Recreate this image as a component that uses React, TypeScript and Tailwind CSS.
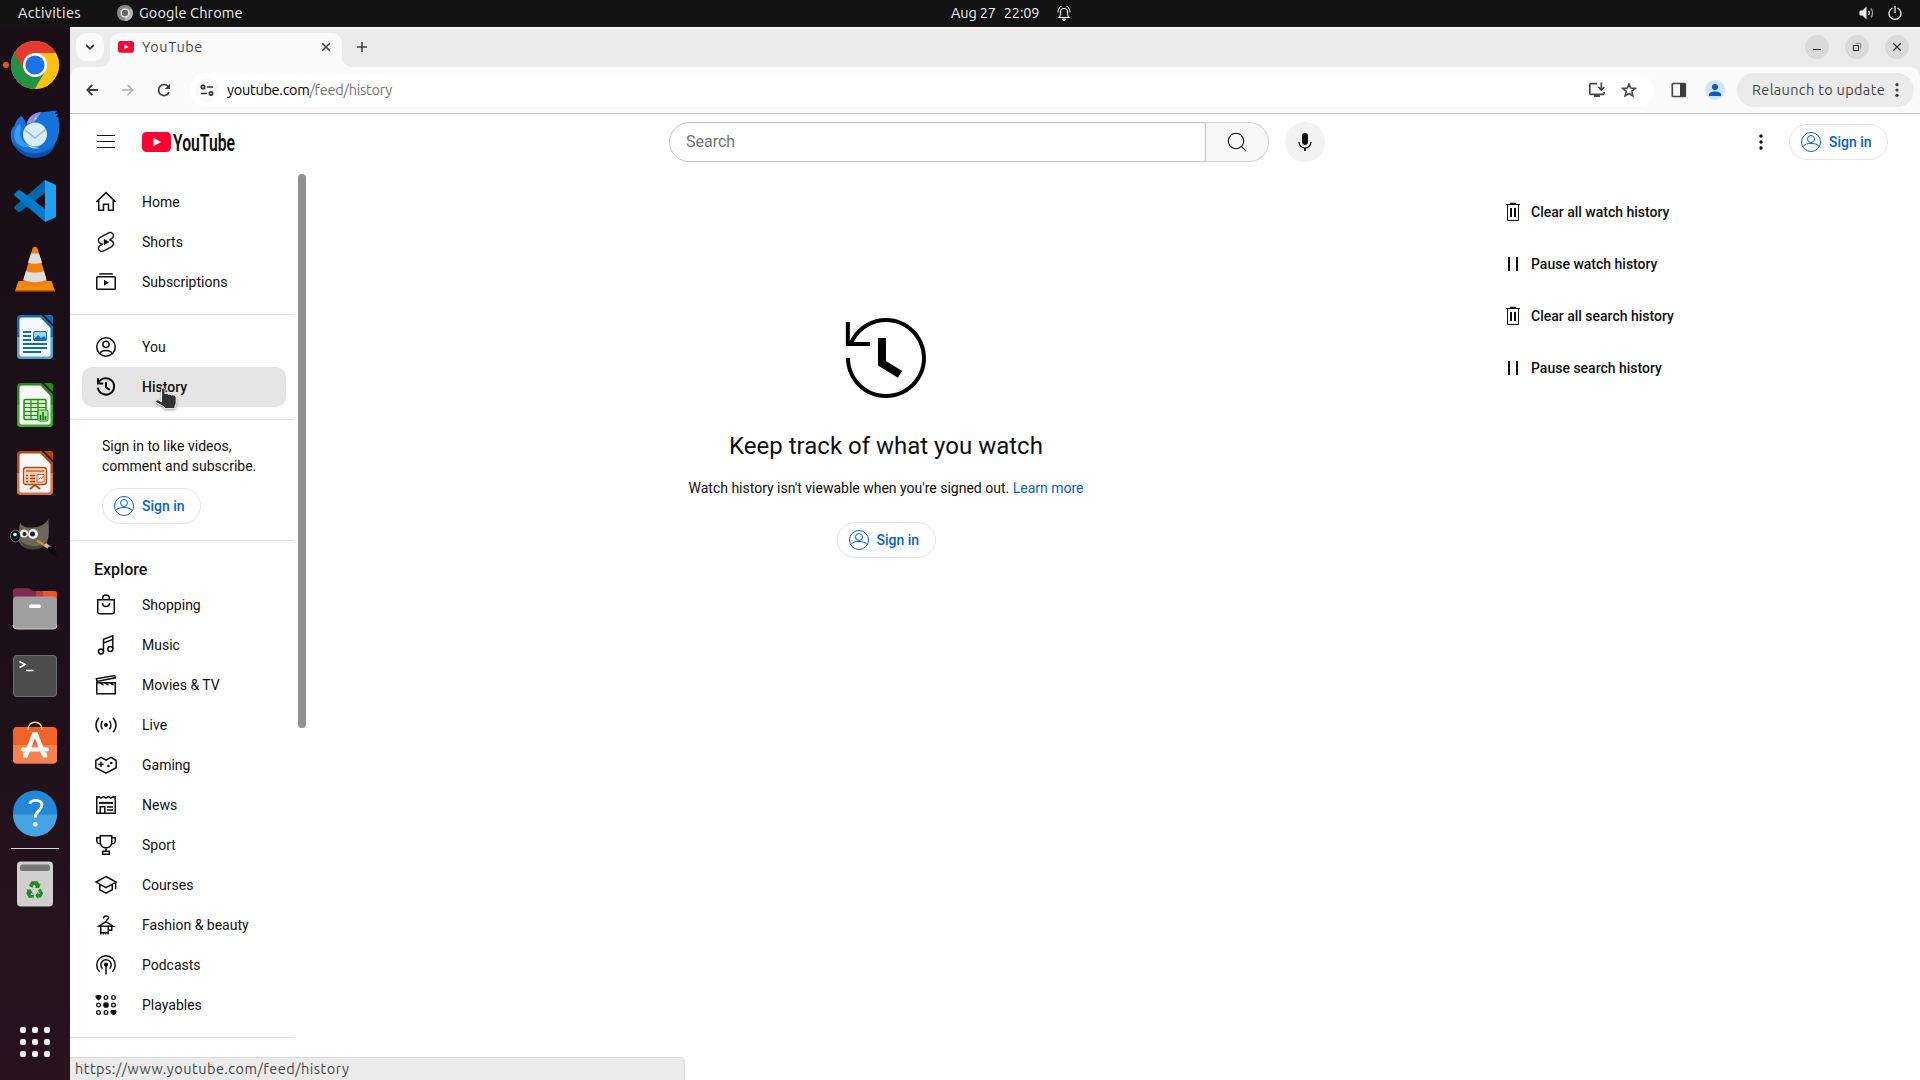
import React from "react";

const UBUNTU = "font-['Ubuntu','Noto_Sans',sans-serif]";

/* ---------- sidebar icons (24 × 24 grid) ---------- */

function Icon({ children, w = 1.5, className = "text-[#0f0f0f]" }: { children: React.ReactNode; w?: number; className?: string }) {
  return (
    <svg viewBox="0 0 24 24" width="24" height="24" fill="none" stroke="currentColor" strokeWidth={w} className={"shrink-0 " + className}>
      {children}
    </svg>
  );
}

const icons: Record<string, React.ReactNode> = {
  Home: (
    <Icon>
      <path d="M2.4 11.9 12 2.6l9.6 9.3M4.75 10v10.25H9.5v-6h5v6h4.75V10" />
    </Icon>
  ),
  Shorts: (
    <Icon w={0.5}>
      <path
        fill="currentColor"
        d="M10 14.65v-5.3L15 12l-5 2.65zm7.77-4.33-1.2-.5L18 9.06c1.84-.96 2.53-3.23 1.56-5.06s-3.24-2.53-5.07-1.56L6 6.94c-1.29.68-2.07 2.04-2 3.49.07 1.42.93 2.67 2.22 3.25.03.01 1.2.5 1.2.5L6 14.93c-1.83.97-2.53 3.24-1.56 5.07.97 1.83 3.24 2.53 5.07 1.56l8.5-4.5c1.29-.68 2.06-2.04 1.99-3.49-.07-1.42-.94-2.68-2.23-3.25zm-.23 5.86-8.5 4.5c-1.34.71-3.01.2-3.72-1.14-.71-1.34-.2-3.01 1.14-3.72l2.04-1.08v-1.21l-.69-.28-1.11-.46c-.99-.41-1.65-1.35-1.7-2.41-.05-1.06.52-2.06 1.46-2.56l8.5-4.5c1.34-.71 3.01-.2 3.72 1.14.71 1.34.2 3.01-1.14 3.72L15.5 9.26v1.21l1.8.74c.99.41 1.65 1.35 1.7 2.41.05 1.06-.52 2.06-1.46 2.56z"
      />
    </Icon>
  ),
  Subscriptions: (
    <Icon>
      <path d="M5.2 3.9h13.6" />
      <rect x="2.75" y="6.75" width="18.5" height="12.5" rx="0.8" />
      <path d="m10 9.8 5 3-5 3z" fill="currentColor" stroke="none" />
    </Icon>
  ),
  You: (
    <Icon>
      <circle cx="12" cy="12" r="9.25" />
      <circle cx="12" cy="9.3" r="3.1" />
      <path d="M5.8 18.6c1.6-4.2 10.8-4.2 12.4 0" />
    </Icon>
  ),
  History: (
    <Icon w={2}>
      <path d="M4 3.2V8.4h5.2M4.3 8.3A8.2 8.2 0 1 1 3.8 12.6" />
      <path d="M12 7.3v5l3.8 2.6" />
    </Icon>
  ),
  Shopping: (
    <Icon>
      <path d="M3.75 6.75h16.5v11.9a2 2 0 0 1-2 2H5.75a2 2 0 0 1-2-2zM8.75 6.500V4.600C8.750 1 15.250 1 15.250 4.600v1.900M8.500 10c0 4.600 7 4.600 7 0" />
    </Icon>
  ),
  Music: (
    <Icon>
      <circle cx="7" cy="18.4" r="2.5" />
      <circle cx="16.300" cy="16" r="2.500" />
      <path d="M9.500 18.400V6.200l9.300-3.400V16M9.500 10l9.300-3.600" />
    </Icon>
  ),
  "Movies & TV": (
    <Icon>
      <path d="M2.75 9.75h18.5v11H2.75zM2.4 5.7l18.4-3.2.4 2.3-18.3 3.6z" />
      <path d="m5 9.7 3 2.6h2.4L8 9.7zm5 0 3 2.6h2.4L13 9.7zm5 0 3 2.6h2.4L18 9.7z" fill="currentColor" stroke="none" />
    </Icon>
  ),
  Live: (
    <Icon>
      <circle cx="12" cy="12" r="2" fill="currentColor" stroke="none" />
      <path d="M8.6 7.8c-2 2.2-2 6.2 0 8.4M15.4 7.8c2 2.2 2 6.2 0 8.4M5 4.9c-4 3.8-4 10.4 0 14.2M19 4.9c4 3.8 4 10.4 0 14.2" />
    </Icon>
  ),
  Gaming: (
    <Icon>
      <path d="m7 4.400 5 2.800 5-2.800 5.200 3.100v7.200L12 20.100 1.800 14.700V7.500z" />
      <path d="M7 8.500v5.400M4.300 11.200h5.400" />
      <circle cx="17.300" cy="10" r="1.300" fill="currentColor" stroke="none" />
      <circle cx="14.400" cy="13" r="1.300" fill="currentColor" stroke="none" />
    </Icon>
  ),
  News: (
    <Icon>
      <path d="M2.75 3v17.25h18.5V3M2.75 5.1l2.1-1.4 2.2 1.4 2.4-1.4L12 5.1l2.4-1.4 2.4 1.4L19 3.7l2.2 1.4" />
      <path d="M5 9.9h14" strokeWidth="2" />
      <path d="M6.2 20v-6.2h4.6V20M13 13.9h6M13 17h6" />
    </Icon>
  ),
  Sport: (
    <Icon>
      <path d="M6.25 2.75h11.5v6.5c0 7.3-11.5 7.3-11.5 0zM6 4.8H2.75v2.6c0 2 1.6 3.4 3.6 3.4M18 4.8h3.25v2.6c0 2-1.6 3.4-3.6 3.4M12 14.8v3.4M8.75 18.25h6.5v3h-6.5z" />
    </Icon>
  ),
  Courses: (
    <Icon>
      <path d="m12 3.5 10 5.6-10 5.6L2 9.1zM5.75 11.5v5.2L12 20.2l6.25-3.5v-5.2M21.6 9.3v7" />
    </Icon>
  ),
  "Fashion & beauty": (
    <Icon>
      <path d="M9.7 5.4c-.4-3 4.7-3.4 4.8-.6.1 1.8-2.5 1.8-2.5 3.9L5 13.2h14l-7-4.5M6.75 13.4v6.4h7.5v-6.4M14.5 17.2h3.2v-3.8" />
      <path d="M6.75 19.5v2M9.25 19.5v2M11.75 19.5v2M14.25 19.5v2" strokeWidth="1.2" />
    </Icon>
  ),
  Podcasts: (
    <Icon>
      <circle cx="12" cy="11.6" r="2.1" fill="currentColor" stroke="none" />
      <path d="M12 11.6v9.8M5.6 18.700a9.250 9.250 0 1 1 12.800 0M8.400 15.700a5.200 5.200 0 1 1 7.200 0" />
    </Icon>
  ),
  Playables: (
    <Icon w={1.3}>
      {[4.5, 12, 19.5].map((y, r) =>
        [4.5, 12, 19.5].map((x, c) => (
          <circle key={x + "-" + y} cx={x} cy={y} r={r === c ? (r === 1 ? 2.2 : 1.6) : 1.85} fill={r === c ? "currentColor" : "none"} />
        ))
      )}
      <path d="M4.500 7.400 1.600 4.500c-1-1.800 1.700-3.600 2.900-1.800 1.200-1.800 3.900 0 2.900 1.800zM19.500 22.400l-2.900-2.900c-1-1.800 1.700-3.600 2.900-1.800 1.200-1.800 3.900 0 2.900 1.800z" fill="currentColor" stroke="none" />
    </Icon>
  ),
};

function UserGlyph() {
  return (
    <Icon w={1} className="text-[#065fd4]">
      <circle cx="12" cy="12" r="9.5" />
      <circle cx="12" cy="9" r="3.5" />
      <path d="M3.9 16.700C5 14 9 13.500 12 13.500s7 .5 8.100 3.200" />
    </Icon>
  );
}

function SignIn({ className = "" }: { className?: string }) {
  return (
    <button className={"flex h-9 w-[99px] items-center rounded-full border border-[#e5e5e5] pl-[9px] text-sm font-medium text-[#065fd4] " + className}>
      <UserGlyph />
      <span className="ml-1.5">Sign in</span>
    </button>
  );
}

function NavItem({ label, active = false }: { label: string; active?: boolean }) {
  return (
    <div className={"ml-3 flex h-10 w-[204px] shrink-0 items-center rounded-[10px] pl-3 text-sm " + (active ? "bg-[#e5e5e5] font-medium" : "")}>
      {icons[label]}
      <span className="ml-6">{label}</span>
    </div>
  );
}

const explore = ["Shopping", "Music", "Movies & TV", "Live", "Gaming", "News", "Sport", "Courses", "Fashion & beauty", "Podcasts", "Playables"];

function Sidebar() {
  return (
    <aside className="flex w-60 shrink-0">
      <div className="flex w-56 shrink-0 flex-col overflow-hidden">
        <div className="flex flex-col border-b border-[#e5e5e5] pt-3 pb-3">
          <NavItem label="Home" />
          <NavItem label="Shorts" />
          <NavItem label="Subscriptions" />
        </div>
        <div className="flex flex-col border-b border-[#e5e5e5] pt-3 pb-3">
          <NavItem label="You" />
          <NavItem label="History" active />
        </div>
        <div className="flex flex-col border-b border-[#e5e5e5] pt-4 pb-4 pl-8 text-sm leading-5">
          <p>
            Sign in to like videos,
            <br />
            comment and subscribe.
          </p>
          <SignIn className="mt-3" />
        </div>
        <div className="flex flex-col border-b border-[#e5e5e5] pt-3 pb-3">
          <h3 className="pt-[5px] pb-[3px] pl-6 text-base leading-6 font-medium">Explore</h3>
          {explore.map((l) => (
            <NavItem key={l} label={l} />
          ))}
        </div>
      </div>
      <div className="mt-1 ml-1 h-[554px] w-2 rounded-full bg-[#909090]" />
    </aside>
  );
}

/* ---------- dock icons (48 × 48 grid) ---------- */

function D({ children, dy = 0 }: { children: React.ReactNode; dy?: number }) {
  return (
    <div className="flex h-[68px] w-full shrink-0 items-center justify-center">
      <svg viewBox="0 0 48 48" width="48" height="48" className="overflow-visible">
        <g transform={`translate(0 ${dy})`}>{children}</g>
      </svg>
    </div>
  );
}

function OfficeDoc({ edge, dark, children }: { edge: string; dark: string; children: React.ReactNode }) {
  return (
    <D>
      <path d="M10 2h20.5L42 13.5V42a4 4 0 0 1-4 4H10a4 4 0 0 1-4-4V6a4 4 0 0 1 4-4z" fill={dark} />
      <path d="M6 24h36v18a4 4 0 0 1-4 4H10a4 4 0 0 1-4-4z" fill={edge} />
      <path d="M10.5 4.5h19L39.5 15v26.5a2 2 0 0 1-2 2h-27a2 2 0 0 1-2-2v-35a2 2 0 0 1 2-2z" fill="#f8f8f8" />
      <path d="M33 2h7a2 2 0 0 1 2 2v7z" fill={dark} />
      {children}
    </D>
  );
}

function Dock() {
  return (
    <nav className="relative flex w-[70px] shrink-0 flex-col items-center bg-linear-to-b from-[#190e15] via-[#1b1017] to-[#28131f] pt-1">
      <span className="absolute top-[35px] left-[3px] h-1.5 w-1.5 rounded-full bg-[#e95420]" />
      <D>
        <circle cx="24" cy="24" r="24" fill="#fbc116" />
        <path d="M3.200 12A24 24 0 0 0 24 48l10.400-18L24 24z" fill="#229342" />
        <path d="M3.200 12A24 24 0 0 1 44.800 12H24L13.600 30z" fill="#e33b2e" />
        <path d="M44.800 12A24 24 0 0 1 24 48l10.400-18V12z" fill="#fbc116" />
        <circle cx="24" cy="24" r="12" fill="#fff" />
        <circle cx="24" cy="24" r="9.600" fill="#1a73e8" />
      </D>
      <D dy={1}>
        <path d="M0 22c1-3 2-6 3-5 1-5 4-9 7-11 3 2 5 6 5 10 1-8 9-14 18-14 5 0 7-2 13-1-1 1-2 2-2 3h3c-1 2-2 2-2 3h2c3 10 1 23-6 31-9 11-27 11-35 1C1 35-1 28 0 22z" fill="#1671d8" />
        <path d="M2 30c6 16 30 18 43 4-4 9-12 14-21 14S4 42 2 30z" fill="#0d4fa6" />
        <path d="M4 30c-2-8 1-13 5-17 1 5 1 8 0 11 1 9 10 12 13 12-8 3-15 0-18-6z" fill="#3b9af0" />
        <path d="M16 14c1-7 6-11 14-12-2 3-4 8-7 10z" fill="#8f8df0" />
        <circle cx="24" cy="24.500" r="12" fill="#d9ecfc" />
        <path d="M13.500 19.500 24 28l10.500-8.500" fill="none" stroke="#8fb8e4" strokeWidth="1.600" />
        <path d="M17 35c5 2 8 2 12 3-6 1-11 0-12-3z" fill="#c9d5fb" />
        <circle cx="24.500" cy="8.500" r="1.100" fill="#fff" />
      </D>
      <D>
        <path d="m34 3-30 26c-1 1-1 2 0 3l3 2.600c.9.700 1.800.600 2.600 0L34 16z" fill="#0065a9" />
        <path d="M34 45 4 19c-1-1-1-2 0-3l3-2.600c.9-.7 1.800-.6 2.600 0L34 32z" fill="#007acc" />
        <path d="m34 3 10 4.400c.7.300 1 .9 1 1.600v30c0 .7-.3 1.300-1 1.600L34 45z" fill="#1fa2f2" />
      </D>
      <D>
        <path d="M7.500 36h33L44 46H4z" fill="#f58a0a" />
        <path d="M4 45h40v1.500H4z" fill="#c85f00" />
        <path d="M21.500 3.500c.5-2.500 4.500-2.500 5 0L36.500 38c-3 4.500-22 4.500-25 0z" fill="#f08010" />
        <path d="m20 8.500h8l3 9c-4 1.600-10 1.600-14 0z" fill="#dedede" />
        <path d="m15 26c5 2 13 2 18 0l2.400 8.500c-6 3.500-17 3.500-23 0z" fill="#dedede" />
      </D>
      <OfficeDoc edge="#4ba3d6" dark="#0f72b0">
        <path d="M12 19h8M12 23h8M12 27h8M12 31h24M12 35h24M12 39h18" stroke="#0f6fb0" strokeWidth="2" />
        <rect x="22.500" y="18.500" width="13" height="9" rx="1.500" fill="#9ed3f3" stroke="#0f6fb0" />
        <path d="m23 26 4-4 3 3 3-2 2.500 3v1.500H23z" fill="#0f6fb0" />
      </OfficeDoc>
      <OfficeDoc edge="#35ad22" dark="#258a16">
        <rect x="13" y="18.500" width="22" height="20" rx="1.500" fill="#d5f5cc" stroke="#258a16" strokeWidth="1.500" />
        <path d="M13 22.500h22M13 26.500h22M13 30.500h22M13 34.500h22M20 18.500v20M27 18.500v20" stroke="#258a16" strokeWidth="1.200" />
        <rect x="27" y="29" width="10" height="11" rx="1.500" fill="#a9e59a" stroke="#258a16" />
        <path d="M29.500 39v-5M32 39v-8M34.500 39v-4" stroke="#176e0b" strokeWidth="1.500" />
      </OfficeDoc>
      <OfficeDoc edge="#e0713a" dark="#b8480f">
        <rect x="12.500" y="18.500" width="23" height="17" rx="2.500" fill="#f3d2c2" stroke="#b8480f" strokeWidth="1.300" />
        <path d="M15 22h18" stroke="#d0622c" strokeWidth="1.500" />
        <path d="M15 26.500h2M15 29.500h2M15 32.500h2M19 26.500h5M19 29.500h5M19 32.500h5" stroke="#a0400c" strokeWidth="1.600" />
        <path d="M26 25.500h7v7.500h-7z" fill="#fff" stroke="#d0622c" />
        <path d="m27.500 31 2-2.500 1.500 1 1.500-2.500" fill="none" stroke="#d0622c" />
        <path d="m24 36-5 4M24 36l5 4" stroke="#b8480f" strokeWidth="2" />
      </OfficeDoc>
      <D dy={1.5}>
        <path d="M9 4c3 5 7 5 12 5 8 0 13-3 16.500-8.500 0 6 1 14-.5 20-2 7-8 10-15 10-9 0-14-4-15-11C8 15 8 10 9 4z" fill="#6b675c" />
        <path d="M9 21c4 7 20 10 28 1-2 6-8 9-15 9-8 0-12-4-13-10z" fill="#47443c" />
        <ellipse cx="4.500" cy="17.500" rx="5" ry="6" fill="#15181b" stroke="#6e7478" />
        <circle cx="4" cy="16" r="1.800" fill="#e8f2f8" />
        <circle cx="13" cy="15" r="4" fill="#e9e9e9" />
        <circle cx="13.500" cy="15.500" r="2" fill="#222" />
        <circle cx="22" cy="15.500" r="5" fill="#f1f1f1" />
        <circle cx="21.500" cy="15.500" r="2.500" fill="#222" />
        <path d="m26 22 11 7" stroke="#e48a22" strokeWidth="2.200" />
        <path d="m34 26 5 3.500" stroke="#b9bcbf" strokeWidth="3.500" />
        <path d="M38 28c4 0 7 4 8 10-4-2-8-3-10-7z" fill="#0c0c0c" />
      </D>
      <D>
        <path d="M2 14V6.500a3 3 0 0 1 3-3h12c2 0 3 2.500 5 2.500h21a3 3 0 0 1 3 3V16H2z" fill="#c23c3c" />
        <path d="M2 14V6.500a3 3 0 0 1 3-3h12c2 0 3 2.500 5 2.500h3v8z" fill="#84294f" />
        <path d="M32 6h11a3 3 0 0 1 3 3v7H32z" fill="#e4572a" />
        <rect x="2" y="11.500" width="44" height="32.500" rx="4" fill="#a09f9f" />
        <path d="M2 40a4 4 0 0 0 4 4h36a4 4 0 0 0 4-4" fill="none" stroke="#c9c9c9" strokeWidth="1" />
        <rect x="18" y="19.500" width="12" height="3.500" rx="1.500" fill="#fff" />
      </D>
      <D dy={1}>
        <rect x="2" y="1" width="44" height="42" rx="4" fill="#4c4c4c" />
        <rect x="2.500" y="1.500" width="43" height="41" rx="3.500" fill="none" stroke="#6b6b6b" />
        <path d="m8.500 7.500 5.500 3-5.500 3M15 16.500h7.500" fill="none" stroke="#fff" strokeWidth="1.600" />
      </D>
      <D>
        <rect x="2" y="6" width="44" height="36.500" rx="4" fill="#f0622c" />
        <path d="M2 24h44v14.500a4 4 0 0 1-4 4H6a4 4 0 0 1-4-4z" fill="#f4834f" />
        <path d="M17 9c0-10.500 14-10.500 14 0" fill="none" stroke="#f6d7ab" strokeWidth="1.500" />
        <path d="M15.500 33 23 13.500h2L32.500 33" fill="none" stroke="#fff" strokeWidth="4.500" />
        <path d="M12.500 31.500h5.500L16.500 36.500H12zM30 31.500h5.500l.8 5H32z" fill="#fff" />
        <rect x="10" y="26.500" width="28" height="4" rx="2" fill="#fff" />
      </D>
      <D dy={-0.5}>
        <circle cx="24" cy="24" r="22" fill="#2386d6" />
        <path d="M2 26a22 22 0 0 0 44 0z" fill="#44a3e3" />
        <path d="M18.800 15.500c1-5 12.200-5 12.200 1.200 0 5.500-6.800 5.500-6.800 12.300" fill="none" stroke="#fff" strokeWidth="2.800" />
        <circle cx="24.200" cy="35.800" r="2.400" fill="#fff" />
      </D>
      <div className="mt-px h-px w-12 shrink-0 bg-[#d8d5d7]" />
      <div className="h-px shrink-0" />
      <D dy={-0.5}>
        <rect x="6" y="2" width="36" height="45" rx="4" fill="#cfcfcf" />
        <rect x="9" y="5" width="30" height="6.500" rx="2.500" fill="#777" />
        <g transform="translate(14.500 21) scale(0.750)" fill="#1f8a24">
          <path d="M8 1h8l2.500 4 2-1-2.500 6h-6l2-1.300L11.500 5 9 9.500 4.500 7z" />
          <path d="M20 11l3.500 6-3 5.500H17V25l-4-5 4-5v2.500h2.500L16.500 13z" />
          <path d="M1 12H7l3 5.500-2-1L6.500 19H11v4H4.500L1 17l1.500-3z" />
        </g>
      </D>
      <div className="mt-auto mb-[23px] grid grid-cols-3 gap-1.5">
        {Array.from({ length: 9 }, (_, i) => (
          <span key={i} className="h-1.5 w-1.5 rounded-[2px] bg-[#f2f2f2]" />
        ))}
      </div>
    </nav>
  );
}

/* ---------- desktop bar ---------- */

function TopBar() {
  return (
    <div className={"flex h-[27px] shrink-0 items-center bg-[#131313] text-[#f0f0f0] " + UBUNTU}>
      <span className="mb-px ml-[18px] w-[63px] text-[14.5px] tracking-[0.35px] whitespace-nowrap">Activities</span>
      <svg viewBox="0 0 16 16" width="16" height="16" className="mb-px ml-9">
        <circle cx="8" cy="8" r="8" fill="#8b8b8b" />
        <path d="M8 16A8 8 0 0 0 15 4.500H8z" fill="#b5b5b5" />
        <circle cx="8" cy="8" r="3.800" fill="#666" stroke="#eee" strokeWidth="1.300" />
      </svg>
      <span className="mb-px ml-[6px] w-[106px] text-[14.5px] tracking-[0.15px] whitespace-nowrap">Google Chrome</span>
      <div className="mb-px ml-[706px] flex w-[88px] gap-2 text-[14.5px] tracking-[-0.15px] whitespace-nowrap">
        <span>Aug 27</span>
        <span>22:09</span>
      </div>
      <svg viewBox="0 0 14 16" width="14" height="16" fill="none" stroke="#f0f0f0" className="mb-0.5 ml-[18px]">
        <path d="M2 12.500c1.500-1 1.500-3 1.500-5.500a3.500 3.500 0 0 1 7 0c0 2.500 0 4.500 1.500 5.500zM1 7.500C1 4 2.500 2 4.500 1.200M13 7.500c0-3.500-1.500-5.500-3.500-6.300" strokeWidth="1.100" />
        <path d="M5.500 14a1.500 1.500 0 0 0 3 0z" fill="#f0f0f0" />
      </svg>
      <div className="mr-[18px] mb-px ml-auto flex items-center gap-[13px]">
        <svg viewBox="0 0 16 16" width="16" height="16" fill="none" stroke="#f0f0f0">
          <path d="M1.500 5.500h2L7.500 1.500v13l-4-4h-2a1 1 0 0 1-1-1v-3a1 1 0 0 1 1-1z" fill="#f0f0f0" stroke="none" />
          <path d="M9.500 6c1 1 1 3 0 4" strokeWidth="1.300" />
          <path d="M12 3.500c2 2.500 2 6.500 0 9" stroke="#aaa" strokeWidth="1.300" />
        </svg>
        <svg viewBox="0 0 14 16" width="14" height="16" fill="none" stroke="#f0f0f0" strokeWidth="1.300">
          <path d="M4.500 3a6 6 0 1 0 5 0M7 1v7" />
        </svg>
      </div>
    </div>
  );
}

/* ---------- browser chrome ---------- */

function TabStrip() {
  return (
    <div className="flex h-10 shrink-0 items-start border-t border-white bg-[#ebebeb] pt-[5px] pl-1.5 text-[#474747]">
      <button className="flex h-7 w-7 items-center justify-center rounded-[10px] bg-[#fafafa]">
        <svg viewBox="0 0 10 10" width="10" height="10" fill="none" stroke="#333" strokeWidth="1.800">
          <path d="m1.200 3 3.800 3.800L8.800 3" />
        </svg>
      </button>
      <div className="relative ml-1.5 flex h-[34px] w-[232px] items-start rounded-t-[10px] bg-[#fafafa]">
        <span className="absolute bottom-0 -left-2.5 h-2.5 w-2.5 bg-[radial-gradient(circle_at_0_0,transparent_9.5px,#fafafa_10.5px)]" />
        <span className="absolute -right-2.5 bottom-0 h-2.5 w-2.5 bg-[radial-gradient(circle_at_100%_0,transparent_9.5px,#fafafa_10.5px)]" />
        <svg viewBox="0 0 16 12" width="16" height="12" className="mt-2 ml-2">
          <rect width="16" height="11.700" rx="2.800" fill="#ff0033" />
          <path d="m6.300 3.500 4.400 2.400-4.400 2.400z" fill="#fff" />
        </svg>
        <span className={"mt-1 ml-2 w-[64px] text-[14.5px] leading-5 tracking-[0.55px] " + UBUNTU}>YouTube</span>
        <svg viewBox="0 0 10 10" width="10" height="10" className="mt-[9px] mr-[11px] ml-auto" fill="none" stroke="#444" strokeWidth="1.600">
          <path d="m1.200 1.200 7.600 7.600M8.800 1.200 1.200 8.800" />
        </svg>
      </div>
      <svg viewBox="0 0 12 12" width="12" height="12" className="mt-2 ml-[14px]" fill="none" stroke="#444" strokeWidth="1.600">
        <path d="M6 1v10M1 6h10" />
      </svg>
      <div className="mt-0.5 mr-[11px] ml-auto flex gap-4">
        <span className="flex h-6 w-6 items-center justify-center rounded-full bg-[#dadada]">
          <svg viewBox="0 0 8 8" width="8" height="8" stroke="#333"><path d="M0 6.500h8" /></svg>
        </span>
        <span className="flex h-6 w-6 items-center justify-center rounded-full bg-[#dadada]">
          <svg viewBox="0 0 8 8" width="8" height="8" fill="none" stroke="#333">
            <rect x="0.500" y="2.500" width="5" height="5" />
            <path d="M2.500.5h5v5" stroke="#888" />
          </svg>
        </span>
        <span className="flex h-6 w-6 items-center justify-center rounded-full bg-[#dadada]">
          <svg viewBox="0 0 8 8" width="8" height="8" stroke="#333" strokeWidth="1.300"><path d="m.3.300 7.400 7.400M7.700.300.300 7.700" /></svg>
        </span>
      </div>
    </div>
  );
}

function Toolbar() {
  return (
    <div className="shrink-0 bg-[#ebebeb]">
      <div className={"flex h-[47px] items-center rounded-t-[10px] border-b border-[#c4c4c4] bg-[#fafafa] " + UBUNTU}>
        <svg viewBox="0 0 12 12" width="12" height="12" className="ml-4" fill="none" stroke="#3c3c3c" strokeWidth="1.800">
          <path d="M12 6H1.300M6.300 1 1.300 6l5 5" />
        </svg>
        <svg viewBox="0 0 12 12" width="12" height="12" className="ml-6" fill="none" stroke="#b0b0b0" strokeWidth="1.600">
          <path d="M0 6h10.700M5.700 1l5 5-5 5" />
        </svg>
        <svg viewBox="0 0 14 14" width="14" height="14" className="ml-[23px]" fill="none" stroke="#3c3c3c" strokeWidth="1.700">
          <path d="M12.100 9.200A5.500 5.500 0 1 1 11.300 3.500L12.300 4.800" />
          <path d="M13 .8v5.200H7.800z" fill="#3c3c3c" stroke="none" />
        </svg>
        <div className="ml-[19px] flex h-[34px] w-[1463px] items-center rounded-full bg-white">
          <span className="ml-[5px] flex h-6 w-6 items-center justify-center rounded-full bg-[#fafafa]">
            <svg viewBox="0 0 14 12" width="14" height="12" fill="none" stroke="#333" strokeWidth="1.700">
              <circle cx="3" cy="3" r="1.700" />
              <path d="M7 3h6M1 9.500h6" />
              <circle cx="11" cy="9.500" r="1.700" />
            </svg>
          </span>
          <span className="ml-2 text-[14.5px] tracking-[-0.26px] whitespace-nowrap text-black">
            youtube.com<span className="text-[#757575]">/feed/history</span>
          </span>
          <svg viewBox="0 0 18 16" width="18" height="16" className="ml-auto" fill="none" stroke="#474747" strokeWidth="1.700">
            <path d="M9 1.700H2.800a1 1 0 0 0-1 1v8.600a1 1 0 0 0 1 1h12.400a1 1 0 0 0 1-1V10M13.300.500v7M10.300 5l3 3 3-3" />
            <path d="M6 13h6v2H6z" fill="#474747" stroke="none" />
          </svg>
          <svg viewBox="0 0 16 16" width="16" height="16" className="mr-4 ml-[15px]" fill="none" stroke="#474747" strokeWidth="1.600">
            <path d="m8 2 1.700 4.100 4.500.4-3.400 2.900 1 4.400L8 11.500l-3.800 2.300 1-4.400L1.800 6.500l4.500-.4z" />
          </svg>
        </div>
        <svg viewBox="0 0 16 16" width="16" height="16" className="ml-[18px]" fill="none" stroke="#474747" strokeWidth="1.700">
          <rect x="1.300" y="1.500" width="13" height="13" rx="1" />
          <path d="M9 1.500h5.500v13H9z" fill="#3c3c3c" stroke="none" />
        </svg>
        <svg viewBox="0 0 20 20" width="20" height="20" className="ml-[18px]">
          <circle cx="10" cy="10" r="10" fill="#d3e3fd" />
          <circle cx="10" cy="7" r="3" fill="#0b57d0" />
          <path d="M4 16v-1.500c0-4 12-4 12 0V16z" fill="#0b57d0" />
        </svg>
        <div className="ml-3 flex h-[34px] w-[177px] items-center rounded-full bg-[#ebebeb] pl-[15px] text-[14.5px] tracking-[0.33px] whitespace-nowrap text-[#474747]">
          <span className="w-[134px]">Relaunch to update</span>
          <svg viewBox="0 0 4 14" width="4" height="14" className="ml-[9px]" fill="#3c3c3c">
            <circle cx="2" cy="1.700" r="1.600" />
            <circle cx="2" cy="7" r="1.600" />
            <circle cx="2" cy="12.300" r="1.600" />
          </svg>
        </div>
      </div>
    </div>
  );
}

/* ---------- page ---------- */

function Masthead() {
  return (
    <header className="flex h-14 shrink-0 items-center">
      <div className="flex w-[599px] items-center">
        <svg viewBox="0 0 24 24" width="24" height="24" className="ml-6" stroke="#0f0f0f">
          <path d="M3 5.500h18M3 11.500h18M3 17.500h18" />
        </svg>
        <svg viewBox="0 0 100 30" width="100" height="30" className="ml-6 overflow-visible">
          <rect y="5" width="29" height="20" rx="4.500" fill="#ff0033" />
          <path d="m11.500 10.800 7.600 4.200-7.600 4.200z" fill="#fff" />
          <text x="31" y="23.500" textLength="62" lengthAdjust="spacingAndGlyphs" fontFamily="Roboto" fontWeight="600" fontSize="23.500" fill="#0f0f0f">
            YouTube
          </text>
        </svg>
      </div>
      <div className="flex h-10 w-[600px]">
        <div className="flex w-[537px] items-center rounded-l-full border border-[#c6c6c6] pl-4 text-base text-[#757575] shadow-[inset_0_1px_2px_#eee]">Search</div>
        <div className="flex flex-1 items-center justify-center rounded-r-full border border-l-0 border-[#d3d3d3] bg-[#f8f8f8]">
          <svg viewBox="0 0 24 24" width="24" height="24" fill="none" stroke="#0f0f0f" strokeWidth="1.100">
            <circle cx="11" cy="11" r="7.700" />
            <path d="m16.300 16.300 4.500 4.500" />
          </svg>
        </div>
      </div>
      <div className="ml-4 flex h-10 w-10 items-center justify-center rounded-full bg-[#f2f2f2]">
        <svg viewBox="0 0 24 24" width="24" height="24" fill="none" stroke="#0f0f0f">
          <rect x="9" y="3" width="6" height="12" rx="3" fill="#0f0f0f" stroke="none" />
          <path d="M6 12a6 6 0 0 0 12 0" strokeWidth="1.200" />
          <path d="M12 18v3" strokeWidth="2" />
        </svg>
      </div>
      <svg viewBox="0 0 24 24" width="24" height="24" className="mr-4 ml-auto" fill="#0f0f0f">
        <circle cx="12" cy="6" r="1.700" />
        <circle cx="12" cy="12" r="1.700" />
        <circle cx="12" cy="18" r="1.700" />
      </svg>
      <div className="mr-8">
        <SignIn />
      </div>
    </header>
  );
}

function TrashIcon() {
  return (
    <svg viewBox="0 0 24 24" width="24" height="24" fill="none" stroke="#0f0f0f">
      <path d="M5 4.500h14M6.500 4.500v16h11v-16" strokeWidth="1" />
      <path d="M9 3.500h6" strokeWidth="1.500" />
      <path d="M10 8v9M14 8v9" strokeWidth="2" />
    </svg>
  );
}

function PauseIcon() {
  return (
    <svg viewBox="0 0 24 24" width="24" height="24" fill="none" stroke="#0f0f0f" strokeWidth="2">
      <path d="M8 5v14M16 5v14" />
    </svg>
  );
}

const actions: [string, boolean][] = [
  ["Clear all watch history", true],
  ["Pause watch history", false],
  ["Clear all search history", true],
  ["Pause search history", false],
];

function Content() {
  return (
    <>
      <section className="flex w-[1152px] shrink-0 flex-col items-center pt-[140px]">
        <svg viewBox="0 0 24 24" width="96" height="96" fill="#000">
          <path d="M14.970 16.950 10 13.870V7h2v5.760l4.030 2.490-1.060 1.700zM22 12c0 5.510-4.490 10-10 10S2 17.510 2 12h1c0 4.960 4.040 9 9 9s9-4.040 9-9-4.040-9-9-9C8.810 3 5.920 4.640 4.280 7.380c-.11.18-.22.37-.31.56L3.940 8H8v1H1.960V3h1v4.740c.04-.09.07-.17.11-.25.11-.22.23-.42.35-.63C5.220 3.860 8.510 2 12 2c5.510 0 10 4.490 10 10z" />
        </svg>
        <h1 className="mt-6 text-2xl leading-8">Keep track of what you watch</h1>
        <p className="mt-4 text-sm leading-5">
          Watch history isn't viewable when you're signed out. <a className="text-[#065fd4]">Learn more</a>
        </p>
        <SignIn className="mt-6" />
      </section>
      <section className="ml-[39px] flex flex-col gap-4 pt-6">
        {actions.map(([label, trash]) => (
          <div key={label} className="flex h-9 items-center text-sm font-medium">
            {trash ? <TrashIcon /> : <PauseIcon />}
            <span className="ml-1.5">{label}</span>
          </div>
        ))}
      </section>
    </>
  );
}

export default function App() {
  return (
    <div className="relative flex h-[1080px] w-[1920px] flex-col overflow-hidden bg-white">
      <TopBar />
      <div className="flex min-h-0 flex-1">
        <Dock />
        <div className="flex min-w-0 flex-1 flex-col">
          <TabStrip />
          <Toolbar />
          <div className="flex min-h-0 flex-1 flex-col bg-white font-['Roboto',sans-serif] text-[#0f0f0f]">
            <Masthead />
            <div className="flex min-h-0 flex-1">
              <Sidebar />
              <Content />
            </div>
          </div>
        </div>
      </div>
      <div className={"absolute bottom-0 left-[70px] flex h-[23px] w-[615px] items-center rounded-tr-[5px] border-t border-r border-[#dcdcdc] bg-[#ebebeb] pl-[5px] text-[14.5px] tracking-[0.48px] text-[#474747] " + UBUNTU}>
        https://www.youtube.com/feed/history
      </div>
      <svg viewBox="0 0 24 24" width="24" height="24" className="absolute top-[387px] left-[155px] drop-shadow-[0_1px_1px_rgba(0,0,0,0.4)]">
        <path
          d="M6.500 2.500c0-2 3.500-2 3.500 0v4.300c1-.8 2.800-.5 3.200.5 1-.6 2.600-.3 3 .8 1.500-.6 5-.3 5 2.200v5c0 2-1.200 2.700-1.200 4.200v2.200H9.500v-1.500L1.300 15.500c-1.300-1.300.5-3.300 2.200-2.500l3 1.800z"
          fill="#333"
          stroke="#fff"
          strokeWidth="1"
        />
      </svg>
    </div>
  );
}
